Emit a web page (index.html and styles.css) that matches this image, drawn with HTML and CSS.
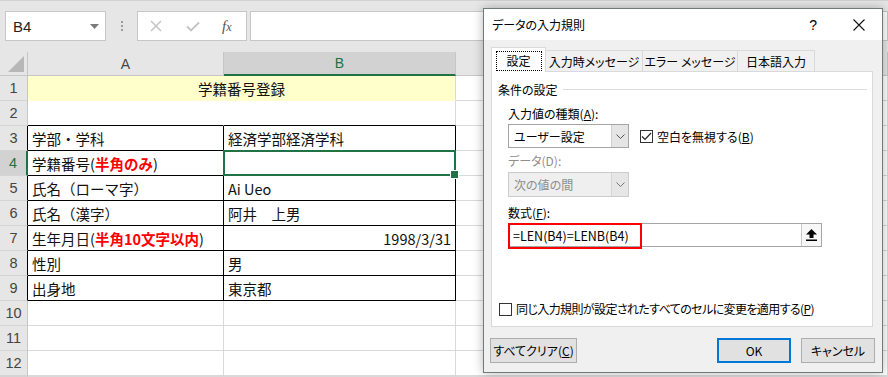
FILE: index.html
```html
<!DOCTYPE html>
<html lang="ja">
<head>
    <meta charset="UTF-8">
    <title>データの入力規則</title>
    <link rel="stylesheet" href="styles.css">
</head>
<body>
    <div class="toolbar">
        <div class="namebox">
            <span>B4</span>
            <svg width="9" height="5" viewBox="0 0 9 5"><path d="M0 0h9L4.5 5z" fill="#7a7a7a"/></svg>
        </div>
        <div class="grip"><i></i><i></i><i></i></div>
        <div class="fxbox">
            <svg width="12" height="12" viewBox="0 0 12 12"><path d="M1 1l10 10M11 1L1 11" stroke="#c4c4c4" stroke-width="1.5"/></svg>
            <svg width="14" height="11" viewBox="0 0 14 11"><path d="M1 5.5l4 4L13 1.5" stroke="#c4c4c4" stroke-width="1.8" fill="none"/></svg>
            <span class="fx">f<span>x</span></span>
        </div>
        <div class="formula"></div>
    </div>

    <div class="sheet">
        <div class="hd corner"><svg width="16" height="16" viewBox="0 0 16 16"><path d="M16 0V16H0z" fill="#b7b7b7"/></svg></div>
        <div class="hd">A</div>
        <div class="hd sel-col">B</div>
        <div class="hd"></div>

        <div class="rh">1</div>
        <div class="cell title">学籍番号登録</div>
        <div class="cell"></div>

        <div class="rh">2</div>
        <div class="cell above-a"></div>
        <div class="cell above-b"></div>
        <div class="cell"></div>

        <div class="rh tl">3</div>
        <div class="cell tb">学部・学科</div>
        <div class="cell tb">経済学部経済学科</div>
        <div class="cell"></div>

        <div class="rh tl sel-row">4</div>
        <div class="cell tb">学籍番号(<b>半角のみ</b>)</div>
        <div class="cell tb sel"></div>
        <div class="cell"></div>

        <div class="rh tl">5</div>
        <div class="cell tb">氏名（ローマ字）</div>
        <div class="cell tb">Ai Ueo</div>
        <div class="cell"></div>

        <div class="rh tl">6</div>
        <div class="cell tb">氏名（漢字）</div>
        <div class="cell tb">阿井　上男</div>
        <div class="cell"></div>

        <div class="rh tl">7</div>
        <div class="cell tb">生年月日(<b>半角10文字以内</b>)</div>
        <div class="cell tb num">1998/3/31</div>
        <div class="cell"></div>

        <div class="rh tl">8</div>
        <div class="cell tb">性別</div>
        <div class="cell tb">男</div>
        <div class="cell"></div>

        <div class="rh tl">9</div>
        <div class="cell tb">出身地</div>
        <div class="cell tb">東京都</div>
        <div class="cell"></div>

        <div class="rh">10</div>
        <div class="cell"></div>
        <div class="cell"></div>
        <div class="cell"></div>

        <div class="rh">11</div>
        <div class="cell"></div>
        <div class="cell"></div>
        <div class="cell"></div>

        <div class="rh">12</div>
        <div class="cell"></div>
        <div class="cell"></div>
        <div class="cell"></div>

        <div class="rh"></div>
        <div class="cell"></div>
        <div class="cell"></div>
        <div class="cell"></div>
    </div>

    <!-- dialog window over the sheet -->
    <div class="dialog">
        <div class="dlg-title">
            <span class="dlg-name">データの入力規則</span>
            <span class="dlg-help">?</span>
            <svg class="dlg-close" width="12" height="12" viewBox="0 0 12 12"><path d="M0.5 0.5l11 11M11.5 0.5l-11 11" stroke="#111" stroke-width="1.1"/></svg>
        </div>
        <div class="dlg-body">
            <div class="tabs">
                <div class="tab active"><span class="focus">設定</span></div>
                <div class="tab">入力時メッセージ</div>
                <div class="tab">エラー メッセージ</div>
                <div class="tab">日本語入力</div>
            </div>
            <div class="panel">
                <div class="group">条件の設定</div>
                <div class="fields">
                    <div class="label">入力値の種類(<u>A</u>):</div>
                    <div class="row">
                        <div class="combo">
                            <span class="combo-text">ユーザー設定</span>
                            <span class="combo-btn"><svg width="9" height="5" viewBox="0 0 9 5"><path d="M0.5 0.5l4 4 4-4" stroke="#555" fill="none"/></svg></span>
                        </div>
                        <div class="check">
                            <span class="box"><svg width="11" height="9" viewBox="0 0 11 9"><path d="M1 4.5l3 3L10 1" stroke="#222" stroke-width="1.2" fill="none"/></svg></span>
                            <span>空白を無視する(<u>B</u>)</span>
                        </div>
                    </div>
                    <div class="label disabled">データ(D):</div>
                    <div class="combo disabled">
                        <span class="combo-text">次の値の間</span>
                        <span class="combo-btn"><svg width="9" height="5" viewBox="0 0 9 5"><path d="M0.5 0.5l4 4 4-4" stroke="#777" fill="none"/></svg></span>
                    </div>
                    <div class="label">数式(<u>F</u>):</div>
                    <div class="formula-input">
                        <span class="ftext">=LEN(B4)=LENB(B4)</span>
                        <span class="ref-btn"><svg width="11" height="12" viewBox="0 0 11 12"><path d="M5.5 0L11 5.5H7.5V9h-4V5.5H0z" fill="#000"/><rect x="0" y="10.5" width="11" height="1.5" fill="#000"/></svg></span>
                        <span class="mark"></span>
                    </div>
                </div>
                <div class="check apply">
                    <span class="box"></span>
                    <span class="apply-text">同じ入力規則が設定されたすべてのセルに変更を適用する(<u>P</u>)</span>
                </div>
            </div>
            <div class="buttons">
                <button class="btn clear">すべてクリア(<u>C</u>)</button>
                <button class="btn ok">OK</button>
                <button class="btn">キャンセル</button>
            </div>
        </div>
    </div>
</body>
</html>
```

FILE: styles.css
```css
* { box-sizing: border-box; }
body { margin: 0; width: 888px; height: 377px; overflow: hidden; position: relative; background: #fff; font-family: "Noto Sans CJK JP", sans-serif; }

/* formula bar */
.toolbar { height: 52px; background: #e6e6e6; border-top: 1px solid #d2d2d2; display: flex; align-items: flex-start; padding-top: 10px; }
.namebox { margin-left: 5px; width: 101px; height: 30px; background: #fff; border: 1px solid #c6c6c6; display: flex; align-items: center; justify-content: space-between; padding: 0 6px 0 7px; font-family: "Liberation Sans", sans-serif; font-size: 15px; color: #222; }
.grip { width: 31px; height: 30px; display: flex; flex-direction: column; align-items: center; justify-content: center; gap: 2px; }
.grip i { width: 2px; height: 2px; background: #9c9c9c; }
.fxbox { width: 110px; height: 30px; background: #fff; border: 1px solid #c6c6c6; display: flex; align-items: center; padding-left: 12px; gap: 24px; }
.fx { font-family: "Liberation Serif", serif; font-style: italic; font-size: 15px; color: #555; margin-left: -2px; }
.fx span { font-size: 12px; }
.formula { margin-left: 3px; flex: 1; height: 30px; background: #fff; border: 1px solid #c6c6c6; }

/* sheet grid */
.sheet { display: grid; grid-template-columns: 28px 196px 232px 1fr; grid-template-rows: 24px repeat(12, 25px) 1px; }
.hd { background: #e6e6e6; border-right: 1px solid #c6c6c6; border-bottom: 1px solid #c6c6c6; display: flex; align-items: center; justify-content: center; font-family: "Liberation Sans", sans-serif; font-size: 14px; color: #444; }
.corner { align-items: flex-end; justify-content: flex-end; padding: 0 3px 3px 0; }
.sel-col { background: #d2d2d2; color: #217346; border-bottom: 2px solid #217346; }
.rh { background: #e6e6e6; border-right: 1px solid #c6c6c6; border-bottom: 1px solid #d4d4d4; display: flex; align-items: center; justify-content: center; font-family: "Liberation Sans", sans-serif; font-size: 14.5px; color: #444; }
.rh.tl { border-right-color: #000; }
.rh.sel-row { background: #d2d2d2; color: #217346; border-right: 2px solid #217346; }

.cell { border-right: 1px solid #d9d9d9; border-bottom: 1px solid #d9d9d9; padding: 0 4px; display: flex; align-items: center; font-size: 14.5px; white-space: nowrap; color: #111; }
.cell b { color: #f00; }
.title { grid-column: span 2; background: #ffffcc; border-bottom-color: #ffffcc; justify-content: center; }
.above-a { border-right-color: #fff; border-bottom-color: #000; }
.above-b { border-bottom-color: #000; }
.tb { border-right-color: #000; border-bottom-color: #000; }
.num { justify-content: flex-end; }
.sel { position: relative; z-index: 1; }
.sel::before { content: ""; position: absolute; top: -1px; left: -1px; right: -1px; bottom: -1px; border: 2px solid #217346; }
.sel::after { content: ""; position: absolute; right: -4px; bottom: -4px; width: 7px; height: 7px; background: #217346; border: 1px solid #fff; }

/* dialog */
.dialog { position: absolute; left: 483px; top: 8px; width: 400px; height: 365px; background: #f0f0f0; border: 1px solid #6e7c75; box-shadow: 0 0 10px rgba(0, 0, 0, 0.28); font-size: 12px; font-feature-settings: "palt"; color: #000; display: flex; flex-direction: column; }
.dlg-title { height: 31px; background: #fff; display: flex; align-items: center; padding-left: 8px; }
.dlg-name { flex: 1; }
.dlg-help { font-family: "Liberation Sans", sans-serif; font-size: 14px; margin-right: 36px; }
.dlg-close { margin-right: 17px; }
.dlg-body { flex: 1; padding: 7px 9px 0 7px; display: flex; flex-direction: column; }

.tabs { display: flex; align-items: flex-end; height: 24px; }
.tab { height: 21px; border: 1px solid #d9d9d9; border-bottom: 0; margin-left: -1px; display: flex; align-items: center; justify-content: center; background: #f0f0f0; }
.tab.active { width: 55px; height: 25px; margin: 0 0 -1px 0; background: #fff; position: relative; z-index: 1; }
.tab:nth-child(2) { width: 98px; }
.tab:nth-child(3) { width: 96px; }
.tab:nth-child(4) { width: 78px; }
.focus { width: 46px; height: 20px; border: 1px dotted #000; display: flex; align-items: center; justify-content: center; margin-top: 1px; }

.panel { height: 256px; background: #fff; border: 1px solid #d9d9d9; display: flex; flex-direction: column; }
.group { margin-top: 8px; height: 18px; display: flex; align-items: center; padding: 0 5px 0 6px; }
.group::after { content: ""; flex: 1; border-top: 1px solid #dcdcdc; margin-left: 5px; }
.fields { padding-left: 16px; }
.label { margin-top: 8px; height: 16px; line-height: 16px; }
.label.disabled { margin-top: 4px; color: #8d8d8d; }
.label + .formula-input { margin-top: 2px; }
u { text-underline-offset: 1px; }

.row { margin-top: 2px; display: flex; align-items: center; }
.combo { width: 121px; height: 24px; border: 1px solid #a5a5a5; background: #fff; display: flex; }
.combo-text { flex: 1; padding-left: 5px; display: flex; align-items: center; }
.combo-btn { width: 17px; background: #e5e5e5; border-left: 1px solid #cfcfcf; display: flex; align-items: center; justify-content: center; }
.combo.disabled { margin-top: 3px; height: 25px; background: #efefef; border-color: #cccccc; color: #8d8d8d; }
.combo.disabled .combo-btn { background: #e6e6e6; border-left-color: #d6d6d6; }
.label:nth-of-type(3) { margin-top: 5px; }

.check { display: flex; align-items: center; gap: 4px; margin-left: 11px; }
.box { width: 13px; height: 13px; border: 1px solid #333; background: #fff; display: flex; align-items: center; justify-content: center; }

.formula-input { width: 314px; height: 24px; border: 1px solid #a5a5a5; position: relative; display: flex; align-items: center; justify-content: space-between; }
.ftext { padding-left: 4px; font-size: 12.5px; font-feature-settings: normal; }
.ref-btn { width: 20px; height: 22px; background: #f7f7f7; border-left: 1px solid #c8c8c8; display: flex; align-items: center; justify-content: center; }
.mark { position: absolute; left: -1px; top: -1px; width: 134px; height: 26px; border: 2px solid #f00; }

.apply { margin: auto 0 9px 7px; line-height: 16px; }
.apply-text { letter-spacing: -0.6px; }

.buttons { display: flex; gap: 10px; margin: 11px -2px 0 -1px; }
.btn { width: 74px; height: 25px; border: 1px solid #adadad; background: #e1e1e1; font: inherit; font-feature-settings: "palt"; color: #000; padding: 0; }
.btn.clear { width: 87px; margin-right: auto; }
.btn.ok { border: 2px solid #0078d7; }
```
